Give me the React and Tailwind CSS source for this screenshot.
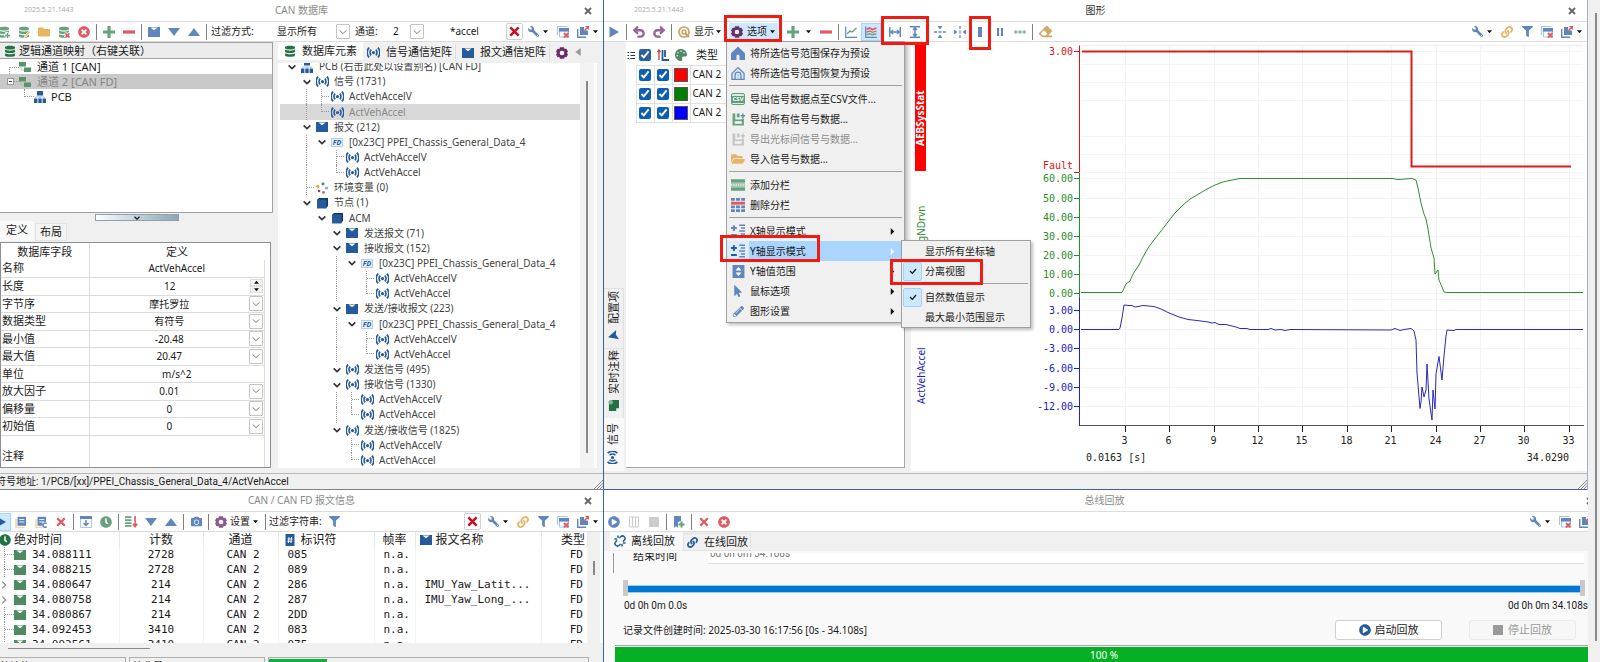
import { useState } from "react";
import {
  FaWrench, FaFilter, FaLink, FaCamera, FaPalette, FaEraser, FaFolder, FaTimesCircle,
  FaPlayCircle, FaClock, FaMousePointer, FaPencilAlt, FaFolderOpen,
} from "react-icons/fa";
import { LuUndo2, LuRedo2, LuUnlink } from "react-icons/lu";

const BLUE = "#5f87bd";
const NAVY = "#255a9b";
const GREEN = "#66a27e";
const RED = "#dd5a62";

/* ---------- icons ---------- */

function Svg({ size = 12, children }) {
  return (
    <svg width={size} height={size} viewBox="0 0 12 12" fill="none" aria-hidden="true" className="shrink-0">
      {children}
    </svg>
  );
}

function Database({ color = "#217346", badge }) {
  return (
    <Svg>
      <path d="M1 2.2C1 .2 11 .2 11 2.2V3c0 2-10 2-10 0z" fill={color} />
      <path d="M1 4.6c2 1.4 8 1.4 10 0v2c0 2-10 2-10 0z" fill={color} />
      <path d="M1 8.2c2 1.4 8 1.4 10 0v2c0 2-10 2-10 0z" fill={color} />
      {badge === "plus" && <path d="M9 6v6M6 9h6" stroke="#fff" strokeWidth="3" />}
      {badge === "plus" && <path d="M9.5 7v5M7 9.5h5" stroke={color} strokeWidth="1.4" />}
      {badge === "edit" && <path d="M6 12l1-3 4-4 1.5 1.5-4 4z" fill="#e9c27a" stroke="#fff" strokeWidth=".6" />}
      {badge === "x" && <path d="M7 7l4.5 4.5M11.5 7L7 11.5" stroke="#fff" strokeWidth="3" />}
      {badge === "x" && <path d="M7.3 7.3l4.2 4.2M11.5 7.3l-4.2 4.2" stroke={RED} strokeWidth="1.7" />}
    </Svg>
  );
}

const Plus = () => <Svg><path d="M6 0v12M0 6h12" stroke={GREEN} strokeWidth="3.2" /></Svg>;
const Minus = () => <Svg><path d="M0 6h12" stroke={RED} strokeWidth="3.2" /></Svg>;
const Cross = ({ color = RED, size = 10 }) => (
  <Svg size={size}><path d="M1.5 1.5l9 9M10.5 1.5l-9 9" stroke={color} strokeWidth="2.8" /></Svg>
);
const Mail = ({ color = NAVY }) => (
  <Svg>
    <path d="M0 1h12v10H0z" fill={color} />
    <path d="M2.5 1.6h7L6 4.2z" fill="#fff" />
  </Svg>
);
const TriDown = () => <Svg><path d="M0 2h12L6 10z" fill={BLUE} /></Svg>;
const TriUp = () => <Svg><path d="M0 10h12L6 2z" fill={BLUE} /></Svg>;
const Caret = () => <Svg size={5}><path d="M0 3h12L6 10z" fill="#111" /></Svg>;
const Chevron = ({ size = 8, color = "#333", width = 2.4 }) => (
  <Svg size={size}><path d="M1 3.5l5 5 5-5" stroke={color} strokeWidth={width} /></Svg>
);
const Gear = ({ color = "#6d2c68" }) => (
  <Svg>
    <path d="M4 .3h4l.6 1.7 1.8-.3L12 4.6 10.900 6 12 7.4l-1.6 2.900-1.8-.3-.6 1.700H4L3.400 10l-1.800.3L0 7.400 1.100 6 0 4.600l1.600-2.900 1.800.3z" fill={color} />
    <circle cx="6" cy="6" r="2.300" fill="#fff" />
  </Svg>
);
const Signal = ({ color = NAVY }) => (
  <Svg size={13}>
    <circle cx="6" cy="6" r="1.500" fill={color} />
    <path d="M3.900 3.300a3.800 3.800 0 000 5.400M8.100 3.300a3.800 3.800 0 010 5.400M2 1.500a6.400 6.400 0 000 9M10 1.500a6.400 6.400 0 010 9" stroke={color} strokeWidth="1.500" />
  </Svg>
);
const Network = () => (
  <Svg>
    <path d="M3 0h6v4.500H3zM0 7.500h3.400V12H0zM4.300 7.500h3.400V12H4.300zM8.600 7.500H12V12H8.600z" fill={NAVY} />
    <path d="M6 4v3M1.700 7.500V6h8.600v1.500" stroke="#8fb0d8" strokeWidth=".8" />
  </Svg>
);
const Channels = () => (
  <Svg>
    <path d="M0 1h7v4.500H0zM5 6.500h7V11H5z" fill="#5c916c" />
    <path d="M2 6v3h3" stroke="#9dbfa8" strokeWidth=".8" />
  </Svg>
);
const Cube = () => (
  <Svg>
    <path d="M3 1h9v8l-2 2V3H1z" fill="#17365f" />
    <path d="M1 2.500h9.500v9H1z" fill={NAVY} />
  </Svg>
);
const Fd = () => (
  <span className="flex h-[9px] w-3 shrink-0 items-center justify-center border border-[#b5d0ee] bg-[#e6f1fc] text-[7px] leading-none font-bold text-[#2a5f9f] italic">
    FD
  </span>
);
const Vars = () => (
  <Svg>
    <circle cx="7" cy="1.800" r="1.600" fill="#5c916c" />
    <circle cx="1.800" cy="4.500" r="1.700" fill="#e3aa55" />
    <circle cx="10.500" cy="6" r="1.600" fill="#7fb2e6" />
    <circle cx="3" cy="9" r="1.300" fill="#84408a" />
    <circle cx="7.500" cy="10.400" r="1.300" fill="#d2595f" />
  </Svg>
);
const WindowX = () => (
  <Svg>
    <path d="M.5 9V.5h10" stroke="#a9c4e4" />
    <path d="M2.500 2.500h9v8.500h-9z" fill="#fff" stroke="#a9c4e4" />
    <path d="M2 2h10v3.600H2z" fill={BLUE} />
    <path d="M7 7l4.500 4.500M11.500 7L7 11.500" stroke={RED} strokeWidth="1.900" />
  </Svg>
);
const Popup = () => (
  <Svg>
    <path d="M.7 3v8.300h8.500" stroke={BLUE} strokeWidth="1.400" />
    <path d="M3 1h4v3.500h4V9H3z" fill={BLUE} />
    <path d="M8 0h4v4z" fill={RED} />
    <path d="M7 5l4-4" stroke={RED} strokeWidth="1.600" />
  </Svg>
);
const Copy = ({ letter }) => (
  <Svg>
    <path d="M1 3v8.500h8.500" stroke="#efd9a8" strokeWidth="1.600" />
    <path d="M2.500.8h8.500v9H2.500z" fill={BLUE} />
    <path d="M4.300 3.500h5M4.300 6h5" stroke="#e8effa" />
    {letter && <path d="M7.500 6H12v6H7.500z" fill="#fff" />}
    {letter && <path d="M11.700 7.600a2.200 2.200 0 100 3" stroke={BLUE} strokeWidth="1.500" />}
  </Svg>
);
const Dock = () => (
  <Svg>
    <path d="M.5.5h11v11H.5z" stroke="#b3cbe8" />
    <path d="M0 0h12v3H0z" fill={BLUE} />
    <path d="M6 4v5M3.500 7L6 9.500 8.500 7" stroke={BLUE} strokeWidth="1.500" />
  </Svg>
);
const Sort = () => (
  <Svg size={13}>
    <path d="M0 2h6M0 4.700h6M0 7.400h6M0 10h6" stroke={GREEN} strokeWidth="1.600" />
    <path d="M9.300 1v9M7.300 8l2 2.700 2-2.700" stroke={RED} strokeWidth="1.500" />
  </Svg>
);
const Hash = () => (
  <Svg>
    <path d="M1.500 0h9v12h-9z" fill={NAVY} />
    <path d="M5 3l-.6 6M7.500 3l-.6 6M3.500 5h5M3.300 7.200h5" stroke="#fff" strokeWidth=".9" />
  </Svg>
);
const LineChart = () => (
  <Svg>
    <path d="M.7.500v10.800H12" stroke={BLUE} strokeWidth="1.200" />
    <path d="M2 8l3-3 2 1 4.500-4" stroke={GREEN} strokeWidth="1.400" />
  </Svg>
);
const WaveChart = () => (
  <Svg>
    <path d="M.7.500v10.800H12" stroke={BLUE} strokeWidth="1.200" />
    <path d="M1.500 3.500l3-1.500 3 1.500 4-1.500" stroke={RED} strokeWidth="1.800" />
    <path d="M1.500 6.300L4.500 5l3 1.300 4-1.300" stroke={RED} strokeWidth="1.300" />
    <path d="M1.500 8.800l3-1 3 1 4-1" stroke={GREEN} strokeWidth="1.400" />
  </Svg>
);
const FitX = () => (
  <Svg><path d="M.7 1v10M11.300 1v10M2 6h8M4 4L2 6l2 2M8 4l2 2-2 2" stroke={BLUE} strokeWidth="1.500" /></Svg>
);
const FitY = () => (
  <Svg><path d="M1 .7h10M1 11.300h10M6 2v8M4 4l2-2 2 2M4 8l2 2 2-2" stroke={BLUE} strokeWidth="1.500" /></Svg>
);
const SplitY = () => (
  <Svg>
    <path d="M0 6h12" stroke={BLUE} strokeWidth="1.300" strokeDasharray="3 1.500" />
    <path d="M3.500 0h5L6 3.500zM3.500 12h5L6 8.500z" fill={BLUE} />
  </Svg>
);
const SplitX = () => (
  <Svg>
    <path d="M6 0v12" stroke={BLUE} strokeWidth="1.300" strokeDasharray="3 1.500" />
    <path d="M0 3.500v5L3.500 6zM12 3.500v5L8.500 6z" fill={BLUE} />
  </Svg>
);
const OneBar = () => <Svg><path d="M4 1h4v10H4z" fill={BLUE} /></Svg>;
const TwoBars = () => <Svg><path d="M3 2h2v8H3zM7 2h2v8H7z" fill={BLUE} /></Svg>;
const Dots = () => (
  <Svg>
    <circle cx="1.800" cy="6" r="1.800" fill="#8bb89b" />
    <circle cx="6" cy="6" r="1.800" fill="#8bb89b" />
    <circle cx="10.200" cy="6" r="1.800" fill="#8bb89b" />
  </Svg>
);
const ShowIcon = () => (
  <Svg>
    <circle cx="6" cy="6" r="5" stroke="#c9a25e" strokeWidth="1.700" />
    <circle cx="6" cy="6" r="2" stroke="#c9a25e" strokeWidth="1.500" />
    <path d="M7 7l4 4" stroke="#c9a25e" strokeWidth="2" />
  </Svg>
);
const Play = ({ color = BLUE }) => <Svg><path d="M1.500.500L11 6l-9.500 5.500z" fill={color} /></Svg>;
const House = ({ outline }) => (
  <Svg size={14}>
    {outline ? (
      <>
        <path d="M.8 6.300L6 1.300l5.200 5V11.500H.8z" fill="#dfe9f5" stroke={BLUE} strokeWidth="1.100" />
        <path d="M3.500 11.500V7.800a2.500 2.500 0 015 0v3.700" stroke={BLUE} strokeWidth="1.100" />
        <path d="M6 7v4.500" stroke="#a9c4e4" />
      </>
    ) : (
      <>
        <path d="M0 6.300L6 .500l6 5.800V12H0z" fill={BLUE} />
        <path d="M4.700 12V8.500a1.300 1.300 0 012.600 0V12z" fill="#f0f0f0" />
      </>
    )}
  </Svg>
);
const Csv = () => (
  <span className="flex h-3 w-[14px] flex-col items-center justify-center rounded-[2px] border border-[#5f9e79] bg-[#dcebe1]">
    <span className="w-full bg-[#5f9e79] text-center text-[6px] leading-[7px] font-bold text-white">CSV</span>
  </span>
);
const Save = ({ color = GREEN, accent = BLUE }) => (
  <Svg size={13}>
    <path d="M.500.500h2.500V6h6V5h2v6.500H.500z" fill={color} />
    <path d="M4.500.500h2.500v3.500H4.500z" fill={color} />
    <path d="M2.500 7.500h6.500v2.500H2.500z" fill="#f0f0f0" />
    <path d="M8 2.500h4M10 .500v4" stroke={accent} strokeWidth="1.300" />
  </Svg>
);
const AddRow = () => (
  <Svg size={14}>
    <path d="M0 1h12v3H0zM0 8h12v3H0z" fill={GREEN} />
    <path d="M0 4h12v4H0z" fill="#a8cab4" />
    <path d="M0 6h12" stroke="#fff" strokeDasharray="1 1" />
  </Svg>
);
const GridIcon = () => (
  <Svg size={14}>
    <path d="M0 0h3.300v2.400H0zM4.300 0h3.400v2.400H4.300zM8.700 0H12v2.400H8.700zM0 9.600h3.300V12H0zM4.300 9.600h3.400V12H4.300zM8.700 9.600H12V12H8.700zM0 6.500h3.300v2.300H0zM4.300 6.500h3.400v2.300H4.300zM8.700 6.500H12v2.300H8.700z" fill={BLUE} />
    <path d="M0 3.200h12v2.500H0z" fill={RED} />
  </Svg>
);
const AxisMode = ({ color = BLUE }) => (
  <Svg size={14}>
    <path d="M0 3.500h5M2.500 1v5M0 9.500h5" stroke={color} strokeWidth="1.700" />
    <path d="M7 1h5M8.500 3.500H12M7 6h5M8.500 8.500H12M7 11h5" stroke={BLUE} strokeWidth="1.300" />
  </Svg>
);
const RangeIcon = () => (
  <Svg size={13}>
    <path d="M.5 0h11v12H.5z" fill={BLUE} />
    <path d="M6 1.800l2.700 3.200H3.300zM6 10.200L8.700 7H3.300z" fill="#fff" />
  </Svg>
);
const NewFile = () => (
  <Svg>
    <path d="M1 0h7v5l-3 1v6l-2-2-2 2z" fill={BLUE} />
    <path d="M8.500 5.500v6M5.500 8.500h6" stroke={GREEN} strokeWidth="2" />
  </Svg>
);

/* ---------- shared pieces ---------- */

function Tool({ label, active, children }) {
  return (
    <button
      type="button"
      aria-label={label}
      className={`flex h-[18px] w-5 shrink-0 items-center justify-center ${active ? "border border-[#a9d3f5] bg-[#cce8ff]" : ""}`}
    >
      {children}
    </button>
  );
}

function Sep() {
  return <span className="mx-[2px] h-4 w-px shrink-0 bg-[#808080]" />;
}

function CaretSlot() {
  return <span className="flex w-[10px] shrink-0 items-center"><Caret /></span>;
}

function TitleBar({ title, version, dark }) {
  return (
    <div className="relative flex h-[22px] shrink-0 items-center justify-center border-b border-[#dcdcdc] bg-white">
      {version && <span className="absolute left-6 top-[3px] text-[7px] leading-[14px] text-[#a8a8a8] font-['Open_Sans',sans-serif]">{version}</span>}
      <h2 className={`text-[10px] ${dark ? "text-[#333]" : "text-[#8a8a8a]"}`}>{title}</h2>
      <button type="button" aria-label="关闭" className="absolute right-[11px] top-[7px]">
        <Cross color="#666" size={8} />
      </button>
    </div>
  );
}

function Toolbar({ children }) {
  return <div className="flex h-5 shrink-0 items-center border-b border-[#dcdcdc] bg-white text-[10px] text-[#1a1a1a]">{children}</div>;
}

function RedCross() {
  return (
    <button type="button" aria-label="清除" className="flex h-[17px] w-[17px] shrink-0 items-center justify-center rounded-[2px] border border-[#d0d0d0]">
      <Cross color="#c50f1f" size={11} />
    </button>
  );
}

function PanelTools({ link }) {
  return (
    <>
      <Tool label="设置工具"><FaWrench size={11} color={BLUE} className="-scale-x-100" /></Tool>
      <CaretSlot />
      {link && <Tool label="链接"><FaLink size={12} color="#e3b566" /></Tool>}
      {link && <Tool label="过滤"><FaFilter size={11} color={BLUE} /></Tool>}
      <Tool label="关闭窗口"><WindowX /></Tool>
      <Tool label="弹出窗口"><Popup /></Tool>
      <CaretSlot />
    </>
  );
}

function StatusBar({ children, blue }) {
  return (
    <div className={`flex h-[17px] shrink-0 items-center overflow-hidden border-t border-b border-t-[#b8b8b8] bg-[#f0f0f0] ${blue ? "border-b-[#3f6296]" : "border-b-[#808080]"}`}>
      {children}
      <svg width="10" height="10" viewBox="0 0 10 10" className="ml-auto self-end" aria-hidden="true">
        <path d="M1 10l9-9M4 10l6-6M7 10l3-3" stroke="#888" />
      </svg>
    </div>
  );
}

// red marker drawn over a control
function Mark({ className }) {
  return <span className={`pointer-events-none absolute z-30 border-[3px] border-[#ee1c12] ${className}`} />;
}

/* ---------- CAN database panel ---------- */

const ICONS = { net: Network, sig: Signal, msg: Mail, fd: Fd, env: Vars, cube: Cube };

// one character of "g" per indent cell: v chevron, | pass-through, T branch, L last branch
const TREE = [
  { g: "v", icon: "net", text: "PCB (右击此处以设置别名) [CAN FD]" },
  { g: " v", icon: "sig", text: "信号 (1731)" },
  { g: " |T", icon: "sig", text: "ActVehAccelV" },
  { g: " |L", icon: "sig", text: "ActVehAccel", selected: true },
  { g: " v", icon: "msg", text: "报文 (212)" },
  { g: " |v", icon: "fd", text: "[0x23C] PPEI_Chassis_General_Data_4" },
  { g: " | T", icon: "sig", text: "ActVehAccelV" },
  { g: " | L", icon: "sig", text: "ActVehAccel" },
  { g: " T", icon: "env", text: "环境变量 (0)" },
  { g: " v", icon: "cube", text: "节点 (1)" },
  { g: "  v", icon: "cube", text: "ACM" },
  { g: "   v", icon: "msg", text: "发送报文 (71)" },
  { g: "   v", icon: "msg", text: "接收报文 (152)" },
  { g: "   |v", icon: "fd", text: "[0x23C] PPEI_Chassis_General_Data_4" },
  { g: "   | T", icon: "sig", text: "ActVehAccelV" },
  { g: "   | L", icon: "sig", text: "ActVehAccel" },
  { g: "   v", icon: "msg", text: "发送/接收报文 (223)" },
  { g: "   |v", icon: "fd", text: "[0x23C] PPEI_Chassis_General_Data_4" },
  { g: "   | T", icon: "sig", text: "ActVehAccelV" },
  { g: "   | L", icon: "sig", text: "ActVehAccel" },
  { g: "   v", icon: "sig", text: "发送信号 (495)" },
  { g: "   v", icon: "sig", text: "接收信号 (1330)" },
  { g: "   |T", icon: "sig", text: "ActVehAccelV" },
  { g: "   |L", icon: "sig", text: "ActVehAccel" },
  { g: "   v", icon: "sig", text: "发送/接收信号 (1825)" },
  { g: "    T", icon: "sig", text: "ActVehAccelV" },
  { g: "    L", icon: "sig", text: "ActVehAccel" },
];

function Guide({ kind }) {
  if (kind === "v") return <span className="flex w-[15px] shrink-0 items-center justify-center"><Chevron size={8} /></span>;
  if (kind === " ") return <span className="w-[15px] shrink-0" />;
  return (
    <span className="flex w-[15px] shrink-0 pl-[7px]">
      <span className={`border-l border-dotted border-[#999] ${kind === "L" ? "h-1/2" : "h-full"}`} />
      {kind !== "|" && <span className="h-1/2 w-2 border-b border-dotted border-[#999]" />}
    </span>
  );
}

function TreeRow({ row }) {
  const Icon = ICONS[row.icon];
  return (
    <li className={`flex min-h-0 pl-[4px] ${row.selected ? "bg-[#d9d9d9] text-[#8a8a8a]" : ""}`}>
      {row.g.split("").map((k, i) => <Guide key={i} kind={k} />)}
      <span className="flex w-4 shrink-0 items-center justify-center"><Icon /></span>
      <span className="ml-1 self-center leading-[15px] whitespace-nowrap">{row.text}</span>
    </li>
  );
}

const FIELDS = [
  { label: "名称", value: "ActVehAccel", type: "text" },
  { label: "长度", value: "12", type: "spin" },
  { label: "字节序", value: "摩托罗拉", type: "select" },
  { label: "数据类型", value: "有符号", type: "select" },
  { label: "最小值", value: "-20.48", type: "select" },
  { label: "最大值", value: "20.47", type: "select" },
  { label: "单位", value: "m/s^2", type: "text" },
  { label: "放大因子", value: "0.01", type: "select" },
  { label: "偏移量", value: "0", type: "select" },
  { label: "初始值", value: "0", type: "select" },
];

function DropArrow() {
  return (
    <span className="pointer-events-none flex h-[15px] w-[14px] shrink-0 items-center justify-center rounded-[1px] border border-[#c4c4c4] bg-white">
      <Chevron size={8} color="#777" width={1.5} />
    </span>
  );
}

function FieldInput({ field, id }) {
  if (field.type === "text") {
    return <input id={id} defaultValue={field.value} className="block h-4 w-full text-center outline-none" />;
  }
  return (
    <div className="flex h-4 items-center pr-px">
      {field.type === "spin" ? (
        <input id={id} defaultValue={field.value} className="h-4 min-w-0 flex-1 text-center outline-none" />
      ) : (
        <select id={id} defaultValue={field.value} className="h-4 min-w-0 flex-1 appearance-none bg-transparent text-center outline-none [text-align-last:center]">
          <option>{field.value}</option>
        </select>
      )}
      {field.type === "spin" ? (
        <span className="flex h-[14px] w-[13px] flex-col items-center justify-between">
          <button type="button" aria-label="增加" className="flex h-[7px] w-full items-center justify-center border border-[#e0e0e0] bg-[#f4f4f4]"><span className="rotate-180"><Caret /></span></button>
          <button type="button" aria-label="减少" className="flex h-[7px] w-full items-center justify-center border border-[#e0e0e0] bg-[#f4f4f4]"><Caret /></button>
        </span>
      ) : (
        <DropArrow />
      )}
    </div>
  );
}

function ChannelTree() {
  return (
    <div className="h-[171px] shrink-0 border border-l-0 border-[#a0a0a0] bg-white text-[11px]">
      <div className="flex h-4 items-center border-b border-[#a0a0a0] bg-[#ececec] pl-1">
        <Database />
        <span className="ml-[3px] leading-4">逻辑通道映射（右键关联）</span>
      </div>
      <ul>
        <li className="flex h-[15px] items-center">
          <span className="ml-[9px] h-[7px] w-[10px] self-end border-t border-l border-dotted border-[#999]" />
          <Channels />
          <span className="ml-[6px] leading-[15px]">通道 1 [CAN]</span>
        </li>
        <li className="flex h-[15px] items-center bg-[#c9c9c9] text-[#858585]">
          <span className="ml-[7px] flex h-[7px] w-[7px] items-center justify-center border border-[#999] bg-white"><span className="h-px w-[3px] bg-[#444]" /></span>
          <span className="w-[5px] border-t border-dotted border-[#999]" />
          <Channels />
          <span className="ml-[6px] leading-[15px]">通道 2 [CAN FD]</span>
        </li>
        <li className="flex h-[15px] items-center">
          <span className="ml-6 h-[8px] w-[10px] self-start border-b border-l border-dotted border-[#999]" />
          <Network />
          <span className="ml-[5px] leading-[15px]">PCB</span>
        </li>
      </ul>
    </div>
  );
}

function DatabasePanel() {
  return (
    <section className="flex min-h-0 flex-1 flex-col">
      <TitleBar title="CAN 数据库" version="2025.5.21.1443" />
      <Toolbar>
        <div className="-ml-[6px] flex items-center">
          <Tool label="新建数据库"><Database color={GREEN} badge="plus" /></Tool>
          <Tool label="编辑数据库"><Database color={GREEN} badge="edit" /></Tool>
          <Tool label="打开"><FaFolder size={12} color="#e8b660" /></Tool>
          <Tool label="删除数据库"><Database color={GREEN} badge="x" /></Tool>
          <Tool label="清空"><FaTimesCircle size={12} color={RED} /></Tool>
          <Sep />
          <Tool label="展开"><Plus /></Tool>
          <Tool label="折叠"><Minus /></Tool>
          <Sep />
          <Tool label="报文"><Mail color={BLUE} /></Tool>
          <Tool label="下一个"><TriDown /></Tool>
          <Tool label="上一个"><TriUp /></Tool>
          <Sep />
        </div>
        <label htmlFor="filter-mode" className="ml-[2px] w-[66px] shrink-0">过滤方式:</label>
        <select id="filter-mode" className="w-[59px] appearance-none bg-transparent outline-none"><option>显示所有</option></select>
        <DropArrow />
        <label htmlFor="channel" className="ml-[5px] w-[38px] shrink-0">通道:</label>
        <select id="channel" className="w-[17px] appearance-none bg-transparent outline-none"><option>2</option></select>
        <DropArrow />
        <input aria-label="过滤字符" defaultValue="*accel" className="ml-[26px] w-[50px] outline-none" />
        <div className="ml-auto flex items-center">
          <RedCross />
          <PanelTools />
        </div>
      </Toolbar>

      <div className="flex min-h-0 flex-1 bg-[#f0f0f0] text-[#1a1a1a]">
        <div className="flex w-[273px] shrink-0 flex-col">
          <ChannelTree />
          <div className="flex h-2 shrink-0 justify-center pt-px">
            <button type="button" aria-label="收起" className="flex h-[7px] w-[84px] items-center justify-center border border-[#8ca0b0] bg-gradient-to-r from-white to-[#8fa5b3]">
              <Chevron size={6} color="#111" />
            </button>
          </div>
          <div className="flex h-[20px] shrink-0 items-end text-[11px]" role="tablist">
            <button type="button" role="tab" aria-selected="true" className="h-5 w-[34px] bg-[#f9f9f9] pb-[3px] leading-4">定义</button>
            <button type="button" role="tab" aria-selected="false" className="ml-px h-[18px] w-8 border border-[#e4e4e4] bg-[#f3f3f3] leading-4">布局</button>
          </div>
          <div className="mt-px mr-[2px] mb-[5px] min-h-0 flex-1 overflow-hidden border border-[#8a8f98] bg-white">
            <table className="w-[264px] table-fixed border-collapse">
              <colgroup>
                <col className="w-[88px]" />
                <col />
              </colgroup>
              <thead className="text-[11px]">
                <tr className="h-[17px]">
                  <th className="border-r border-[#dcdcdc] p-0 font-normal leading-4">数据库字段</th>
                  <th className="p-0 font-normal leading-4">定义</th>
                </tr>
              </thead>
              <tbody>
                {FIELDS.map((field, i) => (
                  <tr key={field.label} className="odd:h-[17px] even:h-[18px]">
                    <td className="border-r border-b border-[#dcdcdc] p-0 pl-px text-[11px] leading-4"><label htmlFor={`field-${i}`}>{field.label}</label></td>
                    <td className="border-r border-b border-[#dcdcdc] p-0 text-[10px] leading-4"><FieldInput field={field} id={`field-${i}`} /></td>
                  </tr>
                ))}
                <tr className="h-8">
                  <td className="border-r border-[#dcdcdc] p-0 pt-[10px] pl-px text-[11px] leading-4">注释</td>
                  <td className="border-r border-[#dcdcdc]" />
                </tr>
              </tbody>
            </table>
          </div>
        </div>

        <div className="ml-[5px] mr-[6px] flex min-w-0 flex-1 flex-col">
          <div className="flex h-[21px] shrink-0 items-start text-[11px] whitespace-nowrap" role="tablist">
            <button type="button" role="tab" aria-selected="true" className="flex h-[18px] w-[85px] items-center bg-white pl-[6px]"><Database /><span className="ml-[6px]">数据库元素</span></button>
            <button type="button" role="tab" aria-selected="false" className="mt-[2px] flex h-[17px] w-[93px] items-center border-r border-[#dedede] pl-[4px]"><Signal /><span className="ml-[6px]">信号通信矩阵</span></button>
            <button type="button" role="tab" aria-selected="false" className="mt-[2px] flex h-[17px] w-[94px] items-center border-r border-[#dedede] pl-[6px]"><Mail /><span className="ml-[6px]">报文通信矩阵</span></button>
            <button type="button" aria-label="设置" className="mt-[2px] flex h-[17px] w-6 items-center justify-center"><Gear /></button>
            <button type="button" aria-label="向左滚动" className="mt-[6px] rotate-90"><Svg size={8}><path d="M0 2h12L6 10z" fill="#999" /></Svg></button>
          </div>
          <div className="mb-[5px] flex min-h-0 flex-1 overflow-hidden bg-white">
            <ul className="-mt-1 ml-[2px] grid w-[300px] grid-rows-[repeat(27,minmax(0,1fr))] text-[10px] text-[#444]">
              {TREE.map((row, i) => <TreeRow key={i} row={row} />)}
            </ul>
            <div className="flex w-[14px] justify-center bg-[#f3f3f3] pt-[18px] pb-[15px]">
              <span className="w-[2px] bg-[#8a8a8a]" />
            </div>
          </div>
        </div>
      </div>
      <StatusBar>
        <span className="-ml-[4px] text-[10px] text-[#1a1a1a] whitespace-nowrap font-['Roboto','Noto_Sans_CJK_SC',sans-serif]">符号地址: 1/PCB/[xx]/PPEI_Chassis_General_Data_4/ActVehAccel</span>
      </StatusBar>
    </section>
  );
}

/* ---------- message panel ---------- */

const MESSAGES = [
  { time: "34.088111", count: 2728, id: "085", name: "" },
  { time: "34.088215", count: 2728, id: "089", name: "" },
  { time: "34.080647", count: 214, id: "286", name: "IMU_Yaw_Latit...", open: true },
  { time: "34.080758", count: 214, id: "287", name: "IMU_Yaw_Long_...", open: true },
  { time: "34.080867", count: 214, id: "2DD", name: "" },
  { time: "34.092453", count: 3410, id: "083", name: "" },
  { time: "34.092561", count: 3410, id: "075", name: "" },
];

function MessagePanel() {
  return (
    <section className="flex h-[172px] shrink-0 flex-col overflow-hidden">
      <TitleBar title="CAN / CAN FD 报文信息" />
      <Toolbar>
        <div className="-ml-[9px] flex items-center">
          <Tool label="运行" active><Play color={NAVY} /></Tool>
          <Tool label="复制"><Copy /></Tool>
          <Tool label="复制为 C"><Copy letter /></Tool>
          <Tool label="清除"><Cross /></Tool>
          <Sep />
          <Tool label="停靠"><Dock /></Tool>
          <Tool label="时间"><FaClock size={12} color={GREEN} /></Tool>
          <Sep />
          <Tool label="排序"><Sort /></Tool>
          <Tool label="下一个"><TriDown /></Tool>
          <Tool label="上一个"><TriUp /></Tool>
          <Sep />
          <Tool label="截图"><FaCamera size={11} color={BLUE} /></Tool>
          <Sep />
          <button type="button" className="flex items-center"><span className="flex w-[19px] justify-center"><Gear color="#8a5a90" /></span>设置<span className="ml-[3px]"><CaretSlot /></span></button>
          <Sep />
        </div>
        <span className="ml-px mr-[3px]">过滤字符串:</span>
        <Tool label="过滤"><FaFilter size={11} color={BLUE} /></Tool>
        <div className="ml-auto flex items-center">
          <RedCross />
          <span className="w-[2px]" />
          <PanelTools link />
        </div>
      </Toolbar>
      <div className="flex h-[111px] shrink-0 overflow-hidden bg-white text-[#1a1a1a]">
        <div className="w-[588px]">
          <table className="w-full table-fixed border-collapse font-['DejaVu_Sans_Mono','Noto_Sans_CJK_SC',monospace] text-[11px]">
            <colgroup>
              <col className="w-[119px]" />
              <col className="w-[84px]" />
              <col className="w-[75px]" />
              <col className="w-[96px]" />
              <col className="w-[41px]" />
              <col className="w-[126px]" />
              <col />
            </colgroup>
            <thead className="font-['Noto_Sans','Noto_Sans_CJK_SC',sans-serif] text-[12px]">
              <tr className="h-[15px] [&>th]:border-r [&>th]:border-[#e8e8e8] [&>th]:p-0 [&>th]:text-left [&>th]:leading-[15px] [&>th]:font-normal">
                <th><span className="-ml-px flex items-center gap-[3px]"><FaClock size={12} color="#217346" />绝对时间</span></th>
                <th><span className="block text-center">计数</span></th>
                <th><span className="block text-center">通道</span></th>
                <th><span className="flex items-center gap-[5px] pl-[5px]"><Hash />标识符</span></th>
                <th><span className="block text-center">帧率</span></th>
                <th><span className="flex items-center gap-1 pl-[4px]"><Mail />报文名称</span></th>
                <th><span className="block pr-[2px] text-right">类型</span></th>
              </tr>
            </thead>
            <tbody>
              {MESSAGES.map((m) => (
                <tr key={m.id} className="h-[15px] [&>td]:border-r [&>td]:border-[#f3f3f3] [&>td]:p-0 [&>td]:leading-[15px]">
                  <td>
                    <span className="flex h-[15px] items-center">
                      {m.open ? (
                        <span className="flex w-[14px] justify-center pr-[6px]"><span className="-rotate-90"><Chevron size={8} color="#888" width={1.8} /></span></span>
                      ) : (
                        <span className="ml-[4px] flex h-full w-[10px] border-l border-dotted border-[#999]"><span className="h-1/2 w-full border-b border-dotted border-[#999]" /></span>
                      )}
                      <Mail color="#4f8a62" />
                      <span className="ml-[6px]">{m.time}</span>
                    </span>
                  </td>
                  <td className="text-center">{m.count}</td>
                  <td><span className="pl-[23px]">CAN 2</span></td>
                  <td><span className="pl-[9px]">{m.id}</span></td>
                  <td><span className="pl-[9px]">n.a.</span></td>
                  <td><span className="pl-[9px]">{m.name}</span></td>
                  <td><span className="block pr-[4px] text-right">FD</span></td>
                </tr>
              ))}
            </tbody>
          </table>
        </div>
        <div className="flex w-[12px] justify-center bg-[#f0f0f0] pt-[29px]"><span className="h-[14px] w-[2px] bg-[#8a8a8a]" /></div>
      </div>
      <div className="shrink-0 bg-[#f0f0f0] pt-[5px] pb-2 pl-2"><div className="h-px w-[142px] bg-[#8a8a8a]" /></div>
      <div className="flex h-5 shrink-0 gap-[3px] bg-[#f0f0f0] text-[10px]">
        <div className="w-[126px] border-t border-r border-[#b0b0b0] leading-4">统计值</div>
        <div className="w-[136px] border-t border-x border-[#b0b0b0] pl-[3px] leading-4">接收量</div>
        <div className="w-[321px] border-t border-x border-[#b0b0b0] pt-px"><div className="h-4 w-[58px] bg-[#12b03a]" /></div>
      </div>
    </section>
  );
}

/* ---------- graph panel ---------- */

const MENU = [
  { icon: <House />, text: "将所选信号范围保存为预设" },
  { icon: <House outline />, text: "将所选信号范围恢复为预设" },
  null,
  { icon: <Csv />, text: "导出信号数据点至CSV文件..." },
  { icon: <Save />, text: "导出所有信号与数据..." },
  { icon: <Save color="#c4c4c4" accent="#c4c4c4" />, text: "导出光标间信号与数据...", disabled: true },
  { icon: <FaFolderOpen size={14} color="#e6b467" />, text: "导入信号与数据..." },
  null,
  { icon: <AddRow />, text: "添加分栏" },
  { icon: <GridIcon />, text: "删除分栏" },
  null,
  { icon: <AxisMode />, text: "X轴显示模式", sub: true },
  { icon: <AxisMode color={NAVY} />, text: "Y轴显示模式", sub: true, open: true },
  { icon: <RangeIcon />, text: "Y轴值范围", sub: true },
  { icon: <FaMousePointer size={12} color={BLUE} />, text: "鼠标选项", sub: true },
  { icon: <FaPencilAlt size={11} color={BLUE} />, text: "图形设置", sub: true },
];

const SUBMENU = [
  { text: "显示所有坐标轴" },
  { text: "分离视图", checked: true, mark: true },
  null,
  { text: "自然数值显示", checked: true },
  { text: "最大最小范围显示" },
];

function MenuLine() {
  return <div className="mx-[2px] mt-[2px] mb-[3px] h-px bg-[#a0a0a0]" />;
}

function SubMenu() {
  return (
    <div role="menu" className="absolute -top-px left-[174px] z-20 w-[130px] border border-[#a0a0a0] bg-[#f0f0f0] shadow-[2px_2px_3px_rgba(0,0,0,0.25)]">
      {SUBMENU.map((item, i) =>
        item === null ? <MenuLine key={i} /> : (
          <div key={i} className="relative">
            <button type="button" role="menuitemcheckbox" aria-checked={!!item.checked} className="flex h-5 w-full items-center">
              <span className={`ml-px mr-[3px] flex h-[19px] w-[19px] items-center justify-center ${item.checked ? "rounded-[2px] border border-[#a5d0f3] bg-[#cce8ff]" : ""}`}>
                {item.checked && <Svg size={8}><path d="M1.500 6l3.500 3.500L10.500 3" stroke="#111" strokeWidth="1.800" /></Svg>}
              </span>
              {item.text}
            </button>
            {item.mark && <Mark className="-left-3 -top-[2px] h-[26px] w-[93px]" />}
          </div>
        )
      )}
    </div>
  );
}

function OptionsMenu() {
  return (
    <div role="menu" className="absolute -left-[3px] top-[18px] z-20 w-[179px] border border-[#a0a0a0] bg-[#f0f0f0] pt-px pb-px text-[10px] text-[#1a1a1a] shadow-[2px_2px_3px_rgba(0,0,0,0.25)]">
      {MENU.map((item, i) =>
        item === null ? <MenuLine key={i} /> : (
          <div key={i} className="relative">
            <button
              type="button"
              role="menuitem"
              disabled={item.disabled}
              className={`flex h-5 w-full items-center whitespace-nowrap ${item.disabled ? "text-[#8c8c8c]" : ""} ${item.open ? "bg-[#aad5ff]" : ""}`}
            >
              <span className={`mr-px flex h-5 w-[22px] items-center justify-center ${item.open ? "bg-[#dcecfb]" : ""}`}>{item.icon}</span>
              {item.text}
              {item.sub && <span className="mr-[8px] ml-auto"><Svg size={7}><path d="M3 0l6 6-6 6z" fill={item.open ? "#fff" : "#111"} /></Svg></span>}
            </button>
            {item.open && <Mark className="-left-[7px] -top-[6px] h-[27px] w-[100px]" />}
            {item.open && <SubMenu />}
          </div>
        )
      )}
    </div>
  );
}

const GREEN_PTS = "1081,292.5 1122,292.5 1126,284 1130,281 1133,274 1139,265 1143,257 1148,248 1154,240 1161,231 1168,222 1175,213 1183,205 1190,199 1197,195 1207,189 1215,185 1223,182 1232,180 1240,178.5 1392,178.5 1398,179.5 1412,178.5 1416,180 1418,188 1421,203 1424,214 1426,219 1428,229 1431,248 1434,258 1435,274 1438,270 1439,280 1442,287 1444,292 1447,292.5 1583,292.5";
const BLUE_PTS = "1081,329.5 1119,329.5 1120,328 1122,318 1124,305 1129,305.5 1132,305.5 1135,307 1138,306.5 1143,305.5 1154,306.5 1161,309 1168,312.5 1179,317 1188,319.5 1197,320.5 1208,322 1212,323 1215,322.5 1219,324.5 1226,324.5 1236,327 1240,328.5 1247,328.5 1250,329.5 1268,329.5 1271,328.5 1275,330 1281,329.5 1285,330.5 1290,329.5 1391,330 1395,328.5 1400,330.5 1404,329.5 1411,328.5 1414,331 1416,340 1417,373 1420,408.5 1421,402 1422,387 1424,397 1426,390 1427,364 1429,399 1432,420 1433,390 1435,409 1436,374 1439,356.5 1442,380 1444,356 1446,336 1447,330 1454,330.5 1456,329.5 1583,329.5";

const Y_TICKS = [
  { color: "#dc1414", items: [["3.00", 51]] },
  { color: "#2a8c2a", items: [["60.00", 178], ["50.00", 198], ["40.00", 217], ["30.00", 236], ["20.00", 255], ["10.00", 274], ["0.00", 293]] },
  { color: "#2222c8", items: [["3.00", 310], ["0.00", 329], ["-3.00", 348], ["-6.00", 368], ["-9.00", 387], ["-12.00", 406]] },
];
const X_TICKS = [3, 6, 9, 12, 15, 18, 21, 24, 27, 30, 33];
const GRID_Y = [51, 64, 82, 100, 136, 154, 172, 178, 198, 217, 236, 255, 274, 293, 299, 310, 329, 348, 368, 387, 406];
const timeToX = (t) => Math.round(1080.3 + t * 14.8) + 0.5;

function Chart() {
  return (
    <svg viewBox="911 42 676 429" preserveAspectRatio="xMinYMin meet" className="block h-full w-full font-['DejaVu_Sans_Mono',monospace] text-[10px]" role="img" aria-label="信号图形">
      <g stroke="#f3f3f3" strokeWidth="1">
        <path d="M1081 45.5H1583" strokeWidth="2" />
        {GRID_Y.map((y) => <path key={y} d={`M1081 ${y + 0.5}H1583`} />)}
        {X_TICKS.map((t) => <path key={t} d={`M${timeToX(t)} 46V426`} />)}
      </g>

      <rect x="915" y="42" width="11" height="129" fill="#ff0000" />
      <text transform="translate(924 146) rotate(-90)" fill="#fff" fontWeight="bold" fontSize="10" className="font-['Noto_Sans',sans-serif]">AEBSysStat</text>
      <text transform="translate(925 242) rotate(-90)" fill="#2a8c2a" fontSize="10" className="font-['Noto_Sans',sans-serif]">gNDrvn</text>
      <text transform="translate(925 404) rotate(-90)" fill="#2222c8" fontSize="10" className="font-['Noto_Sans',sans-serif]">ActVehAccel</text>

      <path d="M1079.5 45.5V172.5M1074 172.5h5" stroke="#dc1414" />
      <path d="M1079.5 173V298" stroke="#2a8c2a" />
      <path d="M1079.5 298V426" stroke="#2222c8" />
      <text x="1073" y="169" textAnchor="end" fill="#dc1414">Fault</text>
      {Y_TICKS.map((axis) => (
        <g key={axis.color} fill={axis.color} stroke="none">
          {axis.items.map(([label, y]) => (
            <g key={label + y}>
              <path d={`M1074 ${y + 0.5}h6`} stroke={axis.color} />
              <text x="1073" y={y + 4} textAnchor="end">{label}</text>
            </g>
          ))}
        </g>
      ))}

      <path d="M1080 425.5H1584" stroke="#555" />
      <g fill="#222">
        {X_TICKS.map((t) => (
          <g key={t}>
            <path d={`M${timeToX(t)} 426v6`} stroke="#222" />
            <text x={timeToX(t) - 1} y="444" textAnchor="middle">{t}</text>
          </g>
        ))}
        <text x="1086" y="461">0.0163 [s]</text>
        <text x="1569" y="461" textAnchor="end">34.0290</text>
      </g>

      <path d="M1082 51.5H1411.5V166.5H1571" fill="none" stroke="#e01a1a" strokeWidth="2" />
      <polyline points={GREEN_PTS} fill="none" stroke="#2f8f2f" />
      <polyline points={BLUE_PTS} fill="none" stroke="#2a2ab8" />
    </svg>
  );
}

const SIGNALS = [
  { color: "bg-[#ff0000]", name: "红色信号" },
  { color: "bg-[#008000]", name: "绿色信号" },
  { color: "bg-[#0000ff]", name: "蓝色信号" },
];

function SignalTable() {
  return (
    <table className="mt-[3px] table-fixed border-collapse text-[10px]">
      <thead>
        <tr className="h-5 [&>th]:p-0">
          <th className="w-[10px]"><Svg size={9}><path d="M2 2h2M2 6h2M2 10h2M6 2h6M6 6h6M6 10h6" stroke="#333" strokeWidth="1.400" /></Svg></th>
          <th className="w-[18px]"><input type="checkbox" aria-label="全选" defaultChecked className="mx-auto block h-3 w-3 accent-[#2a5f9f]" /></th>
          <th className="w-[18px]"><span className="flex justify-center"><Svg size={12}><path d="M2 11V1M.500 3L2 1l1.500 2" stroke="#c8443c" strokeWidth="1.300" /><path d="M5.500 1v10H12M8 1v7" stroke={NAVY} strokeWidth="1.800" /></Svg></span></th>
          <th className="w-[18px]"><FaPalette size={12} color="#4f8a62" className="mx-auto" /></th>
          <th className="w-[60px] text-left text-[11px] font-normal"><span className="pl-[6px]">类型</span></th>
        </tr>
      </thead>
      <tbody>
        {SIGNALS.map((s) => (
          <tr key={s.name} className="h-[19px] [&>td]:p-0 [&>td+td]:border [&>td+td]:border-[#e0e0e0]">
            <td />
            <td><input type="checkbox" aria-label={`显示${s.name}`} defaultChecked className="mx-auto block h-3 w-3 accent-[#0a5fb4]" /></td>
            <td><input type="checkbox" aria-label={`坐标轴${s.name}`} defaultChecked className="mx-auto block h-3 w-3 accent-[#0a5fb4]" /></td>
            <td><span className={`mx-auto block h-[14px] w-[14px] border border-[#555] ${s.color}`} /></td>
            <td><span className="pl-[2px]">CAN 2</span></td>
          </tr>
        ))}
      </tbody>
    </table>
  );
}

function SideTab({ icon, active, className, children }) {
  return (
    <button
      type="button"
      role="tab"
      aria-selected={!!active}
      className={`flex w-full flex-col items-center justify-end gap-[6px] pb-[7px] text-[11px] ${active ? "bg-[#f9f9f9] pr-[3px]" : "border-t border-r border-[#e0e0e0]"} ${className}`}
    >
      <span className="rotate-180 leading-[14px] [text-orientation:sideways] [writing-mode:vertical-rl]">{children}</span>
      <span className="-rotate-90">{icon}</span>
    </button>
  );
}

function GraphPanel() {
  const [menuOpen, setMenuOpen] = useState(true);
  return (
    <section className="flex min-h-0 flex-1 flex-col border-r border-[#9db4d6]">
      <div className="flex flex-col [&>div>span]:left-[30px]">
        <TitleBar title="图形" version="2025.5.21.1443" dark />
      </div>
      <Toolbar>
        <Tool label="运行"><Play /></Tool>
        <Sep />
        <Tool label="撤销"><LuUndo2 size={14} color="#96629a" strokeWidth={4} /></Tool>
        <Tool label="重做"><LuRedo2 size={14} color="#96629a" strokeWidth={4} /></Tool>
        <Sep />
        <button type="button" className="flex items-center"><span className="flex w-5 justify-center"><ShowIcon /></span>显示<span className="ml-[2px]"><CaretSlot /></span></button>
        <div className="relative ml-[3px]">
          <button type="button" aria-expanded={menuOpen} onClick={() => setMenuOpen(!menuOpen)} className="flex h-[17px] w-[49px] items-center bg-[#cce8ff] pl-[2px]">
            <Gear /><span className="ml-[4px] mr-[3px]">选项</span><Caret />
          </button>
          <Mark className="-left-[5px] -top-[8px] h-[27px] w-[58px]" />
          {menuOpen && <OptionsMenu />}
        </div>
        <div className="ml-[5px] flex">
          <Tool label="添加"><Plus /></Tool>
          <span className="flex w-[13px] items-center pl-[3px]"><Caret /></span>
          <Tool label="移除"><Minus /></Tool>
        </div>
        <Sep />
        <Tool label="单图"><LineChart /></Tool>
        <Tool label="多图" active><WaveChart /></Tool>
        <div className="relative ml-1 flex">
          <Tool label="X 轴适应"><FitX /></Tool>
          <Tool label="Y 轴适应"><FitY /></Tool>
          <Mark className="-left-1 -top-[7px] h-[29px] w-[48px]" />
        </div>
        <div className="ml-[5px] flex">
          <Tool label="Y 轴居中"><SplitY /></Tool>
          <Tool label="X 轴居中"><SplitX /></Tool>
          <div className="relative">
            <Tool label="单光标"><OneBar /></Tool>
            <Mark className="-left-px -top-[7px] h-[34px] w-[22px]" />
          </div>
          <Tool label="双光标"><TwoBars /></Tool>
          <Tool label="更多"><Dots /></Tool>
        </div>
        <Sep />
        <Tool label="擦除"><FaEraser size={13} color="#d0aa6a" /></Tool>
        <div className="ml-auto flex items-center">
          <PanelTools link />
        </div>
      </Toolbar>

      <div className="flex min-h-0 flex-1 bg-[#f0f0f0] text-[#1a1a1a]">
        <div className="flex w-[20px] shrink-0 flex-col justify-end pb-[2px]" role="tablist">
          <SideTab className="h-[60px]" icon={<Svg size={11}><path d="M2 12L4 0l8 9-5-.5z" fill={NAVY} /></Svg>}>配置项</SideTab>
          <SideTab className="h-[70px]" icon={<Svg size={11}><path d="M0 1h8l4 3v8H3V9H0z" fill="#217346" /><circle cx="9.500" cy="3" r="2.500" fill="#7fb594" /></Svg>}>实时注释</SideTab>
          <SideTab className="h-[53px]" active icon={<Signal />}>信号</SideTab>
        </div>
        <div className="mb-[5px] ml-[2px] w-[279px] shrink-0 border-r border-b border-[#a8a8a8] bg-white">
          <SignalTable />
        </div>
        <div className="mb-[2px] ml-[6px] min-w-0 flex-1 bg-white">
          <Chart />
        </div>
      </div>
      <StatusBar blue />
    </section>
  );
}

/* ---------- replay panel ---------- */

const thumb =
  "pointer-events-none absolute inset-0 m-0 h-4 w-full appearance-none bg-transparent [&::-webkit-slider-thumb]:pointer-events-auto [&::-webkit-slider-thumb]:h-4 [&::-webkit-slider-thumb]:w-[5px] [&::-webkit-slider-thumb]:appearance-none [&::-webkit-slider-thumb]:bg-[#c8c8c8]";

function ReplayPanel() {
  return (
    <section className="h-[172px] shrink-0 overflow-hidden text-[#1a1a1a]">
      {/* wider than its dock, so the right edge is cut off */}
      <div className="flex w-[calc(100%+17px)] flex-col">
        <TitleBar title="总线回放" />
        <Toolbar>
          <Tool label="播放"><FaPlayCircle size={12} color={BLUE} /></Tool>
          <Tool label="暂停"><Svg><path d="M1.500 1h9v10h-9zM4.500 1v10M7.500 1v10" stroke="#ccc" /></Svg></Tool>
          <Tool label="停止"><Svg><path d="M1 1h10v10H1z" fill="#ccc" /></Svg></Tool>
          <Sep />
          <Tool label="添加文件"><NewFile /></Tool>
          <Sep />
          <Tool label="移除"><Cross /></Tool>
          <Tool label="清空"><FaTimesCircle size={12} color={RED} /></Tool>
          <div className="ml-auto flex items-center"><PanelTools /></div>
        </Toolbar>
        <div className="flex h-[19px] bg-[#f0f0f0] pl-[6px] text-[11px]" role="tablist">
          <button type="button" role="tab" aria-selected="true" className="flex h-[18px] w-[73px] items-center gap-[5px] bg-[#f9f9f9] pl-1"><LuUnlink size={12} color={NAVY} strokeWidth={3} />离线回放</button>
          <button type="button" role="tab" aria-selected="false" className="mt-px flex h-[18px] w-[68px] items-center gap-[6px] border border-[#e2e2e2] pl-[3px]"><FaLink size={11} color={NAVY} />在线回放</button>
        </div>
        <div className="h-[111px] bg-[#f9f9f9] pt-[2px] pl-[9px] pr-[17px] text-[10px]">
          <div className="flex h-5 items-start overflow-hidden border-l border-[#999] pl-[19px]">
            <label htmlFor="end-time" className="-mt-[4px] w-[75px] text-[11px] leading-[14px]">结束时间</label>
            <div className="mr-1 h-[11px] flex-1 overflow-hidden border-b border-[#e0e0e0] bg-white">
              <input id="end-time" defaultValue="0d 0h 0m 34.108s" className="-mt-[7px] block h-[14px] w-full pl-[2px] text-[#777] outline-none font-['Roboto',sans-serif]" />
            </div>
          </div>
          <div className="relative mt-[7px] mr-[3px] ml-[10px] h-4">
            <div className="absolute inset-x-1 top-[5px] h-2 border-y border-[#9cccf0] bg-[#0078d4]" />
            <input type="range" aria-label="回放起点" min="0" max="34108" defaultValue="0" className={thumb} />
            <input type="range" aria-label="回放终点" min="0" max="34108" defaultValue="34108" className={thumb} />
          </div>
          <div className="mt-[2px] ml-[11px] flex justify-between leading-4 whitespace-nowrap font-['Roboto',sans-serif]">
            <span>0d 0h 0m 0.0s</span>
            <span>0d 0h 0m 34.108s</span>
          </div>
          <div className="mt-[6px] ml-[10px] mr-[12px] flex h-5 items-center">
            <span>记录文件创建时间: 2025-03-30 16:17:56 [0s - 34.108s]</span>
            <button type="button" className="ml-auto flex h-5 w-[107px] items-center justify-center gap-1 rounded-[3px] border border-[#cfcfcf] bg-white text-[11px]"><FaPlayCircle size={12} color={NAVY} />启动回放</button>
            <button type="button" disabled className="ml-[27px] flex h-5 w-[107px] items-center justify-center gap-[5px] rounded-[3px] border border-[#ebebeb] bg-[#f7f7f7] text-[11px] text-[#999]"><span className="h-[10px] w-[10px] bg-[#999]" />停止回放</button>
          </div>
          <div className="mt-[5px] ml-[2px] h-5 border-t border-[#aaa] pt-px">
            <div role="progressbar" aria-valuenow={100} className="h-[18px] bg-[#06b025] pl-[5px] text-center leading-4 text-white">100 %</div>
          </div>
        </div>
      </div>
    </section>
  );
}

export default function App() {
  return (
    <main className="flex h-screen overflow-hidden bg-[#f0f0f0] font-['Noto_Sans','Noto_Sans_CJK_SC',sans-serif]">
      <div className="flex w-[603px] shrink-0 flex-col">
        <DatabasePanel />
        <MessagePanel />
      </div>
      <div className="flex min-w-0 flex-1 flex-col border-l border-[#3f6296]">
        <GraphPanel />
        <ReplayPanel />
      </div>
      <div className="flex w-3 shrink-0 justify-center pt-[13px] pl-[3px] pb-[21px]">
        <span className="w-[2px] bg-[#8a8a8a]" />
      </div>
    </main>
  );
}
